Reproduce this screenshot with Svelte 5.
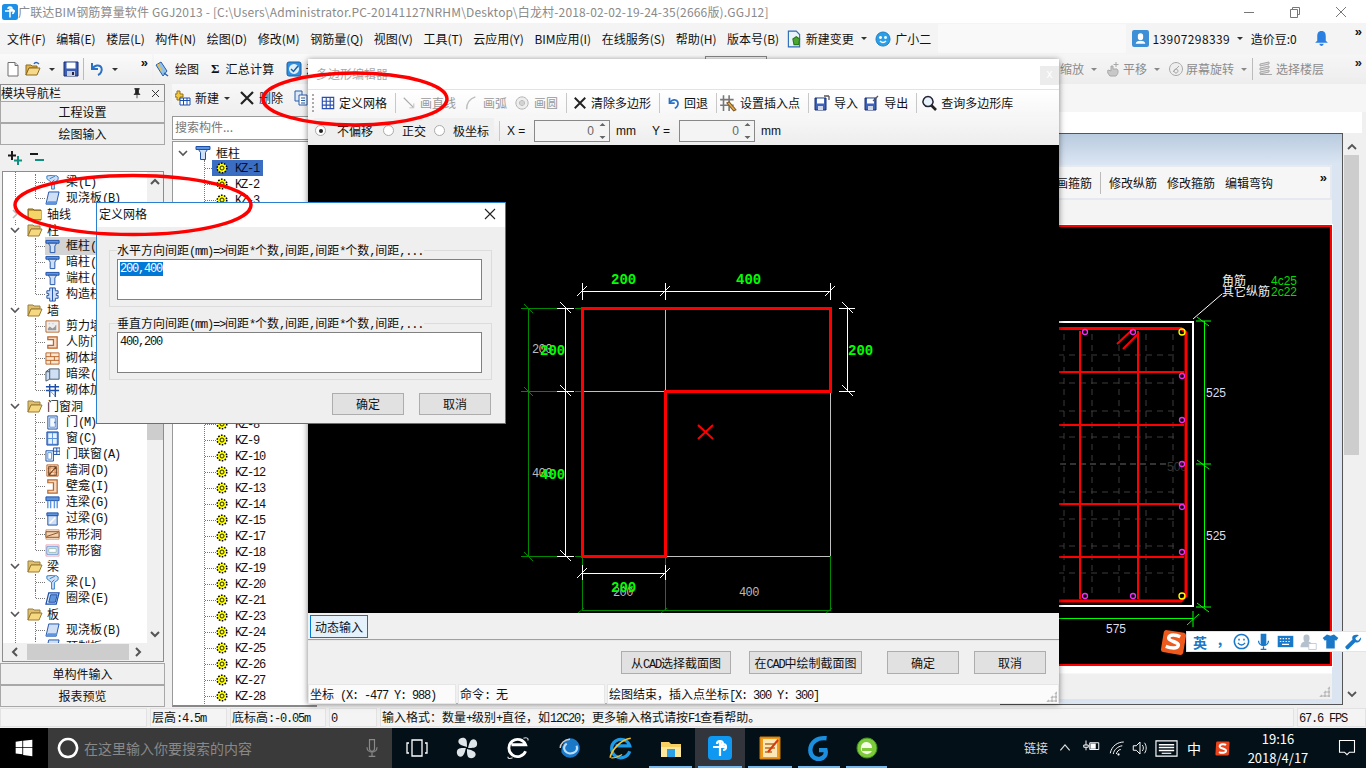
<script>
const B = '#1d4fa8', L = '#cfe0f6', M = '#5d95de', O = '#b8642a', P = '#f6d8c0', G = '#a8a8a8';
const I = {
  logo: [['M2.5 0h11A2.5 2.5 0 0 1 16 2.500v11a2.500 2.500 0 0 1-2.500 2.500h-11A2.500 2.500 0 0 1 0 13.500v-11A2.500 2.500 0 0 1 2.500 0z', '#1c8fe6', 'none'], ['M8 2.500v11M3 7h10M8 7a2 2 0 1 0-2-2M8 7a2 2 0 1 1 2 2.500', 'none', '#fff', 1.5]],
  new: [['M3 1.500h7l3 3V15H3z', '#fff', '#6f6f6f'], ['M10 1.500v3h3', '#ddd', '#6f6f6f']],
  open: [['M1 4h5l1 1h5v2H4l-3 7z', '#e4b24a', '#8a6a20'], ['M4 7h11l-3 7H1z', '#f7d98a', '#8a6a20'], ['M9 3c1-2 3-2 5 0', 'none', '#2f66b8', 1.4]],
  save: [['M1 1h14v14H1z', '#3b5fb5', '#1b2f70'], ['M3.500 1.500h9v6h-9z', '#fff', 'none'], ['M4 10h8v5H4z', '#c8d0e0', 'none'], ['M9 11h2v3H9z', '#224', 'none']],
  undo: [['M4 2v6h6', 'none', '#2a70c8', 2], ['M4.500 8C6 4 12 3 13.500 7c1 3-1 6-3.500 7', 'none', '#2a70c8', 2]],
  draw: [['M2 4l5-3 6 9-4 5z', '#8fc0ec', '#2a5ea8'], ['M4 3l4 8', 'none', '#f0c040', 1.5], ['M10 12l4 3', 'none', '#2a5ea8', 1.5]],
  check: [['M3 1h10a2 2 0 0 1 2 2v10a2 2 0 0 1-2 2H3a2 2 0 0 1-2-2V3a2 2 0 0 1 2-2z', '#2f8fe0', '#1a5fa0'], ['M8 3a5 5 0 1 0 .01 0z', '#dff0fc', 'none'], ['M5 8l2.500 2.500L12 5', 'none', '#1a5fa0', 1.5]],
  newi: [['M2 1h3v3h3v3H5v3H2V7H0V4h2z', '#f0c83a', '#93701a'], ['M5 8h10v7H5z', '#fff', B], ['M5 10.500h10M8.500 8v7M12 8v7', 'none', B]],
  x: [['M2 2l12 12M14 2L2 14', 'none', '#222', 2.2]],
  copy: [['M2 1h7v10H2z', '#dbe8fa', '#2a5ea8'], ['M6 5h8v10H6z', '#fff', '#2a5ea8'], ['M8 8h4M8 10.500h4M8 13h4', 'none', '#2a5ea8']],
  grid: [['M1.500 1.500h13v13h-13zM6 1.500v13M10.500 1.500v13M1.500 6h13M1.500 10.500h13', 'none', '#2a4fb0', 1.3]],
  line: [['M2 2l11 11', 'none', '#aaa', 1.3], ['M8.500 13.500h5v-5', 'none', '#bbb']],
  arc: [['M3 15C3 8 7 3 13 1', 'none', '#bdbdbd', 1.6]],
  circ: [['M8 1a7 7 0 1 0 .01 0z', '#eee', '#aaa'], ['M8 5a3 3 0 1 0 .01 0z', '#d2d2d2', '#b8b8b8']],
  pin: [['M4 1v14M9 1v14M1 5h12M1 10h12', 'none', '#777', 1.4], ['M9 7l6 7-2 1-6-7z', '#e8b04a', '#8a5a20']],
  imp: [['M1 3h11v12H1z', '#3f63b8', '#1b2f70'], ['M3 3.500h7v5H3z', '#fff', 'none'], ['M4 11h5v4H4z', '#d0d8e8', 'none'], ['M10 1l5 0M15 1v4', 'none', '#555', 1.3]],
  exp: [['M1 3h11v12H1z', '#3f63b8', '#1b2f70'], ['M3 3.500h7v5H3z', '#fff', 'none'], ['M4 11h5v4H4z', '#d0d8e8', 'none'], ['M9 6l5-5', 'none', '#555', 1.3]],
  search: [['M7 1.500a5 5 0 1 0 .01 0z', '#e8f2fb', '#223', 1.5], ['M10.500 10.500l4.500 4.500', 'none', '#222', 2.6]],
  pan: [['M5 15c-2-2-3-4-2-6l3 1V5h2v3h4c2 2 1 5-1 7z', '#c8c8c8', G], ['M11 1v5M8.500 3.500h5', 'none', G]],
  rot: [['M8 1.500a6.500 6.500 0 1 0 .01 0z', '#eee', G], ['M5 11l6-6M8 8a2 2 0 1 0 .01 0z', 'none', G]],
  layer: [['M2 3l9-2v2l-9 2zM2 7l9-2v2l-9 2zM2 11l9-2v2l-9 2z', '#ddd', G], ['M2 13.500h12', 'none', G]],
  doc: [['M3 1h7l3 3v11H3z', '#eaf3fc', '#2a6ab8'], ['M7 8l3-2 3 2-1 5H8z', '#4aa832', '#2a7a1a']],
  mascot: [['M8 1a7 7 0 0 1 7 7c0 4-3 7-7 7s-7-3-7-7a7 7 0 0 1 7-7z', '#2a9fe8', '#1a7fc8'], ['M5.500 5a1.500 1.500 0 1 0 .01 0zM10.500 5a1.500 1.500 0 1 0 .01 0z', '#fff', 'none'], ['M5 10c2 2 4 2 6 0', 'none', '#fff', 1.3]],
  user: [['M2 0h12a2 2 0 0 1 2 2v12a2 2 0 0 1-2 2H2a2 2 0 0 1-2-2V2a2 2 0 0 1 2-2z', '#3f8fd6', 'none'], ['M8 3a2.500 2.500 0 0 1 2.500 2.500V7a2.500 2.500 0 0 1-5 0V5.500A2.500 2.500 0 0 1 8 3zM3.500 13c0-2 2-3 4.500-3s4.500 1 4.500 3z', '#fff', 'none']],
  bell: [['M8 1c3 0 4 2 4 5v4l2 2H2l2-2V6c0-3 1-5 4-5z', '#2a7fe0', 'none'], ['M6 13h4a2 2 0 0 1-4 0z', '#2a7fe0', 'none']],
  plusplus: [['M5 1v9M1 5.500h8', 'none', '#1a1a1a', 2], ['M11 6v9M7 10.500h8', 'none', '#0f8f80', 2]],
  minusminus: [['M1 4h8', 'none', '#1a1a1a', 2], ['M6 10h9', 'none', '#0f8f80', 2]],
  pintack: [['M5 2h6v1H10v5l2 2H4l2-2V3H5zM8 10v5', '#222', '#222']],
  folder: [['M1 3h5l1 1h7v10H1z', '#caa034', '#7a6018'], ['M2 5h12v8H2z', '#f5d468', 'none']],
  fopen: [['M1 3h5l1 1h6v3H4l-3 7z', '#e0c070', '#9a8040'], ['M4 7h11l-3 7H1z', '#f6d880', '#9a7a30']],
  col: [['M1 1.500h14v3H1z', M, B], ['M3.500 4.500l2 3v7h5v-7l2-3z', L, B]],
  cons: [['M5 1h6v3h3v3h-2v2h2v3h-3v3H5v-3H2V9h2V7H2V4h3z', L, B], ['M8 1v14', 'none', B]],
  shear: [['M1 2h14v12H1z', '#eee', O], ['M3 10l2-2 3 2 4-3v5H3z', '#999', 'none'], ['M4 5h1M8 5h1M11 7h1', 'none', '#aaa']],
  rf: [['M3 2h10v12H3v-3h6V5H3z', P, O, 1.3]],
  brick: [['M1 2h14v12H1z', '#fbe6d0', O], ['M1 6h14M1 10h14M6 2v4M10 6v4M6 10v4', 'none', O]],
  dark: [['M1 5l4-3h10v11H5l-4 2z', L, '#456'], ['M5 2v11M1 5h4', 'none', '#456']],
  rebar: [['M1 4h14M1 8h14', 'none', B, 1.5], ['M5 1v14M11 1v14', 'none', B, 1.5], ['M5 8l6 6', 'none', M]],
  door: [['M3 1h10v14H3z', '#dceafa', B], ['M5 3h6v10H5z', '#f4f8fd', M], ['M10 8h1', 'none', B, 1.5]],
  win: [['M2 1h12v14H2z', M, B], ['M3.500 2.500h4v5h-4zM8.500 2.500h4v5h-4zM3.500 8.500h4v5h-4zM8.500 8.500h4v5h-4z', '#eaf3fc', 'none']],
  dw: [['M1 4h8v11H1z', '#eaf3fc', B], ['M3 6h4v7H3z', '#fff', M], ['M9 1h7v7H9z', '#eaf3fc', B], ['M12.500 1v7M9 4.500h7', 'none', B]],
  hole: [['M2 2h12v12H2z', '#fbe6d0', O], ['M2 6h12M2 10h12M6 2v12M10 2v12', 'none', '#e0a070'], ['M4 13L12 4M4 4h8v9H4z', 'none', '#6b3d1a', 1.2]],
  niche: [['M3 1h10v14H3v-3h6V4H3z', P, O, 1.3]],
  lb: [['M1 2h14v4H1z', M, B], ['M3 6v8M6 6v8M10 6v8M13 6v8', 'none', M, 1.5]],
  gl: [['M2 2h12v3H2z', M, B], ['M3 5h10v10H3z', L, B], ['M5 13l6-6', 'none', '#fff', 1.5]],
  bh: [['M1 3h14v10H1z', '#fbe9da', '#d89a70'], ['M1 5h14v6H1z', '#f2d0b0', '#8a5020'], ['M2 10l12-4', 'none', '#8a5020']],
  bw: [['M1 2h14v12H1z', '#fde7e0', '#eab'], ['M2 4h12v8H2z', '#eaf3fc', M], ['M4 6h8v4H4z', '#fff', '#9bb']],
  beam: [['M2 1l9-1 3 2v3l-4 3v7H7V8L2 4z', L, '#2a7ac8'], ['M5 4l6-3M7 8l3-3', 'none', '#2a7ac8']],
  ring: [['M4 2h11l-3 12H1z', '#dceafa', B, 1.3], ['M6 4h7l-2 8H4z', '#5f95dc', B]],
  slab: [['M4 1h11l-3 13H1z', L, B], ['M3 11l-2 3h11l1-3z', M, 'none']],
  win10: [['M2 4.500l8-1.100V11H2zM11 3.200L22 2v9H11zM2 12h8v7.600l-8-1.100zM11 12h11v10l-11-1.500z', '#fff', 'none']],
  cort: [['M12 3a9 9 0 1 0 .01 0z', 'none', '#fff', 2.600]],
  mic: [['M9 2h6v11a3 3 0 0 1-6 0z', 'none', '#8a8a8a', 1.4], ['M6 11c0 8 12 8 12 0M12 18v4M8 22h8', 'none', '#8a8a8a', 1.4]],
  task: [['M7 4h10v16H7z', 'none', '#fff', 1.3], ['M4 7H2v10h2M20 7h2v10h-2', 'none', '#fff', 1.3]],
  wheel: [['M12 11C8 10 4 9 4 6s4-4 6-3 2 4 2 8zM13 12c1-4 2-8 5-8s4 4 3 6-4 2-8 2zM12 13c4 1 8 2 8 5s-4 4-6 3-2-4-2-8zM11 12c-1 4-2 8-5 8s-4-4-3-6 4-2 8-2z', '#dfe6ea', 'none']],
  ewhite: [['M19 15a8 8 0 1 1 0-6H6', 'none', '#fff', 2.600], ['M17 3c3-1 5 0 4 2M3 20c-1 2 2 2 4 1', 'none', '#ddd', 1]],
  cw: [['M12 3a9 9 0 1 1-8 13c0-8 5-13 8-13z', '#1a78c8', 'none'], ['M9 8a6 5 0 1 0 9 2', 'none', '#bdf', 2], ['M3 12c0-4 4-8 9-8', 'none', '#ccc', 1.400]],
  ie: [['M20 15a8.500 8.500 0 1 1 0-5H7', 'none', '#1e9be8', 3], ['M2 21C3 14 12 4 21 3', 'none', '#f4c430', 1.5], ['M3 21c3 1 8-2 10-3', 'none', '#f4c430', 1.2]],
  expl: [['M2 6h8l2 2h10v13H2z', '#f6d060', 'none'], ['M2 11h20v10H2z', '#fce89a', 'none'], ['M8 13h8v8H8z', '#2aa0e8', 'none']],
  app: [['M4 0h16a4 4 0 0 1 4 4v16a4 4 0 0 1-4 4H4a4 4 0 0 1-4-4V4a4 4 0 0 1 4-4z', '#0e98f2', 'none'], ['M12 4v16M5 11h14M12 11a3 3 0 1 0-3-3M12 11a3 3 0 1 1 3 3', 'none', '#fff', 2.200]],
  note: [['M2 1h20v22H2z', '#f09a1a', '#c87a10'], ['M5 3h14v18H5z', '#fbe7b8', 'none'], ['M7 8h10M7 12h10M7 16h7', 'none', '#b87020', 1.5], ['M20 4L10 16', 'none', '#d63a10', 2]],
  gg: [['M19 3C10 2 4 7 4 14c0 5 4 9 9 8 4-1 6-4 5-8h-6', 'none', '#1a8fe0', 4]],
  egreen: [['M12 2a10 10 0 1 0 .01 0z', '#7ecb3a', '#3a8a20'], ['M12 6a6 6 0 1 0 5 9H7v-3h10a6 6 0 0 0-5-6z', '#f4fbe6', 'none']],
  plug: [['M4 2v6M1 8h6v3H1zM4 11v4', 'none', '#fff', 1.3], ['M9 5h12v9H9z', 'none', '#fff', 1.3], ['M10 6h7v7h-7z', '#fff', 'none']],
  wifi: [['M3 19c2-10 10-15 18-15M7 20c1-6 6-10 12-11M11 20c1-3 3-6 6-6', 'none', '#fff', 1.3], ['M14 19a1.500 1.500 0 1 0 .01 0z', '#fff', 'none']],
  vol: [['M3 9h4l5-5v16l-5-5H3z', 'none', '#fff', 1.3], ['M15 8c2 2 2 6 0 8M18 5c3 4 3 10 0 14', 'none', '#fff', 1.2]],
  kb: [['M1 4h22v16H1z', 'none', '#fff', 1.2], ['M4 8h16M4 11h16M4 14h16', 'none', '#fff', 1.5], ['M7 17h10', 'none', '#fff', 1.2]],
  sred: [['M5 2h15a2 2 0 0 1 2 2l-1 16a2 2 0 0 1-2 2H4a2 2 0 0 1-2-2L3 4a2 2 0 0 1 2-2z', '#e8431a', 'none'], ['M17 7c-3-2-9-1-9 2s9 3 9 6-6 4-10 2', 'none', '#fff', 2.800]],
  bubble: [['M3 3h18v14h-6l-3 3-3-3H3z', 'none', '#fff', 1.3]],
  up: [['M3 12l6-7 6 7', 'none', '#ddd', 1.5]],
  sbS: [['M6 2l19 3a3 3 0 0 1 2 3l-3 18a3 3 0 0 1-3 2L3 25a3 3 0 0 1-2-3L4 4a3 3 0 0 1 2-2z', '#ee5a1e', 'none'], ['M21 9c-4-2-11-3-12 1s11 4 10 8-8 3-13 1', 'none', '#fff', 3.600]],
  smile: [['M12 2a10 10 0 1 0 .01 0z', '#fff', '#1a78c8', 2.200], ['M8.500 8v2.500M15.500 8v2.500', 'none', '#1a78c8', 2.200], ['M7 14c3 4 7 4 10 0', 'none', '#1a78c8', 2]],
  smic: [['M8 1h8v13a4 4 0 0 1-8 0z', '#1a78c8', 'none'], ['M5 11c0 9 14 9 14 0M12 19v4M8 23h8', 'none', '#1a78c8', 1.8]],
  skb: [['M1 4h22v16H1z', '#1a78c8', 'none'], ['M4 8h2M8 8h2M12 8h2M16 8h2M4 12h2M8 12h2M12 12h2M16 12h2M7 16h10', 'none', '#fff', 1.600]],
  suser: [['M10 2a4 4 0 0 1 4 4v2a4 4 0 0 1-8 0V6a4 4 0 0 1 4-4zM2 19c0-6 4-8 8-8s8 2 8 8z', '#b4c0cc', 'none'], ['M13 14h10v8H13z', '#fff', '#b4c0cc']],
  shirt: [['M7 2l5 2 5-2 6 5-3 4-2-1v12H6V10l-2 1-3-4z', '#1a78c8', 'none']],
  wrench: [['M21 3l-5 4 1 3 3 1 4-5c1 4-3 9-8 7L6 23c-2 1-5-2-4-4l10-10c-2-5 3-8 9-6z', '#1a78c8', 'none']]
};
const nav = [
  { t: '梁(L)', i: 'beam' }, { t: '现浇板(B)', i: 'slab', last: 1 },
  { t: '轴线', f: 'c' }, { t: '柱', f: 'o' },
  { t: '框柱(Z)', i: 'col', sel: 1 }, { t: '暗柱(Z)', i: 'col' }, { t: '端柱(Z)', i: 'col' }, { t: '构造柱(Z)', i: 'cons', last: 1 },
  { t: '墙', f: 'o' },
  { t: '剪力墙(Q)', i: 'shear' }, { t: '人防门框墙(RF)', i: 'rf' }, { t: '砌体墙(Q)', i: 'brick' }, { t: '暗梁(A)', i: 'dark' }, { t: '砌体加筋(Y)', i: 'rebar', last: 1 },
  { t: '门窗洞', f: 'o' },
  { t: '门(M)', i: 'door' }, { t: '窗(C)', i: 'win' }, { t: '门联窗(A)', i: 'dw' }, { t: '墙洞(D)', i: 'hole' }, { t: '壁龛(I)', i: 'niche' }, { t: '连梁(G)', i: 'lb' }, { t: '过梁(G)', i: 'gl' }, { t: '带形洞', i: 'bh' }, { t: '带形窗', i: 'bw', last: 1 },
  { t: '梁', f: 'o' },
  { t: '梁(L)', i: 'beam' }, { t: '圈梁(E)', i: 'ring', last: 1 },
  { t: '板', f: 'o' },
  { t: '现浇板(B)', i: 'slab' }
];
const kzTop = ['KZ-1', 'KZ-2', 'KZ-3'];
const kzBottom = ['KZ-8', 'KZ-9', 'KZ-10', 'KZ-12', 'KZ-13', 'KZ-14', 'KZ-15', 'KZ-17', 'KZ-18', 'KZ-19', 'KZ-20', 'KZ-21', 'KZ-23', 'KZ-24', 'KZ-25', 'KZ-26', 'KZ-27', 'KZ-28'];
const menu = ['文件(F)', '编辑(E)', '楼层(L)', '构件(N)', '绘图(D)', '修改(M)', '钢筋量(Q)', '视图(V)', '工具(T)', '云应用(Y)', 'BIM应用(I)', '在线服务(S)', '帮助(H)', '版本号(B)'];
const parts = (t) => t.match(/[\x20-\x7e]+|[^\x20-\x7e]+/g);
const hBars = [373, 426, 505, 558];
const gridV = [1064, 1092, 1119, 1146, 1173];
const gridH = [356, 384, 412, 438, 493, 520, 547, 574];
const dotsR = [377, 421, 465, 508, 553];
</script>

{#snippet ic(n, s = 16, vb = 16)}
  <svg class="ico" width={s} height={s} viewBox="0 0 {vb} {vb}">
    {#each I[n] as [d, f, st, w]}<path {d} fill={f} stroke={st} stroke-width={w || 1} />{/each}
  </svg>
{/snippet}
{#snippet ss(t)}{#each parts(t) as p}{#if p.charCodeAt(0) < 127}<span class="m">{p}</span>{:else}{p}{/if}{/each}{/snippet}
{#snippet dn()}<i class="caret"></i>{/snippet}
{#snippet kz(name, sel)}
  <div class="kzrow">
    <div class="kzin" class:on={sel}>
      <svg class="gear" width="12" height="12" viewBox="0 0 12 12"><circle cx="6" cy="6" r="4.800" fill="#ff0" stroke="#000" stroke-width="1.500" stroke-dasharray="1.600 1.400" /><circle cx="6" cy="6" r="2" fill="#ff0" stroke="#222" /></svg>
      <span class="kzname">{@render ss(name)}</span>
    </div>
  </div>
{/snippet}

<div class="app">
  <header class="title">
    {@render ic('logo')}
    <span class="ttext">广联达BIM钢筋算量软件 GGJ2013 - [C:\Users\Administrator.PC-20141127NRHM\Desktop\白龙村-2018-02-02-19-24-35(2666版).GGJ12]</span>
    <div class="wctl">
      <svg width="12" height="12" viewBox="0 0 12 12"><path d="M1 6.500h10" stroke="#777" /></svg>
      <svg width="12" height="12" viewBox="0 0 12 12"><path d="M1.500 3.500h7v8h-7zM3.500 3.500v-2h7v7h-2" fill="none" stroke="#777" /></svg>
      <svg width="12" height="12" viewBox="0 0 12 12"><path d="M1 1l10 10M11 1L1 11" stroke="#777" /></svg>
    </div>
  </header>

  <nav class="menu">
    {#each menu as m}<span class="mi">{m}</span>{/each}
    <span class="mi2 change">{@render ic('doc', 18)}新建变更{@render dn()}</span>
    <span class="mi2 mascot">{@render ic('mascot')}广小二</span>
    <div class="blank"></div>
    <span class="mi2 acct">{@render ic('user', 17)}<span class="phone">13907298339</span>{@render dn()}</span>
    <span class="mi2 bean">造价豆:0</span>
    <span class="bell">{@render ic('bell', 17)}</span>
    <span class="more">»</span>
  </nav>

  <div class="tools">
    <div class="tg tg1">
      {@render ic('new')}
      {@render ic('open')}{@render dn()}
      {@render ic('save')}
      <i class="vs"></i>
      {@render ic('undo')}{@render dn()}
      <span class="more mt">»</span>
    </div>
    <div class="tg tg2">
      {@render ic('draw')}<span>绘图</span>
      <b class="sig">Σ</b><span class="wide">汇总计算</span>
      {@render ic('check')}<span>云</span>
    </div>
    <div class="pressed"></div>
    <div class="tg tg3">
      <span>缩放</span>{@render dn()}
      {@render ic('pan')}<span>平移</span>{@render dn()}
      {@render ic('rot')}<span>屏幕旋转</span>{@render dn()}
      <i class="vs"></i>
      {@render ic('layer')}<span>选择楼层</span>
      <span class="more mt2">»</span>
    </div>
  </div>

  <div class="work">
    <aside class="navp">
      <div class="navh"><span>模块导航栏</span><span class="nhic">{@render ic('pintack', 12)}<svg width="9" height="9" viewBox="0 0 9 9"><path d="M1 1l7 7M8 1L1 8" stroke="#333" /></svg></span></div>
      <div class="nbtn">工程设置</div>
      <div class="nbtn">绘图输入</div>
      <div class="ntools">{@render ic('plusplus')}{@render ic('minusminus')}</div>
      <div class="ntree">
        <div class="nbody">
          <div class="nrows">
            <i class="rootline"></i>
            {#each nav as r}
              {#if r.f}
                <div class="row root">
                  <svg class="chev" width="10" height="10" viewBox="0 0 10 10">
                    {#if r.f === 'o'}<path d="M1 3l4 4 4-4" fill="none" stroke="#555" stroke-width="1.600" />{:else}<path d="M3 1l4 4-4 4" fill="none" stroke="#bbb" stroke-width="1.600" />{/if}
                  </svg>
                  {@render ic(r.f === 'o' ? 'fopen' : 'folder')}
                  <span class="lbl">{r.t}</span>
                </div>
              {:else}
                <div class="row child" class:last={r.last}>
                  <i class="vl"></i><i class="hl"></i>
                  <span class="cell" class:sel={r.sel}>{@render ic(r.i, 15)}<span class="lbl">{@render ss(r.t)}</span></span>
                </div>
              {/if}
            {/each}
            <div class="row child"><i class="vl"></i><i class="hl"></i><span class="cell">{@render ic('slab', 15)}<span class="lbl">预制板</span></span></div>
          </div>
          <div class="vbar">
            <svg width="12" height="9" viewBox="0 0 12 9"><path d="M2 7l4-4 4 4" fill="none" stroke="#555" stroke-width="2" /></svg>
            <i class="vthumb"></i>
            <svg width="12" height="9" viewBox="0 0 12 9"><path d="M2 2l4 4 4-4" fill="none" stroke="#555" stroke-width="2" /></svg>
          </div>
        </div>
        <div class="hbar">
          <svg width="8" height="12" viewBox="0 0 8 12"><path d="M6 2L2 6l4 4" fill="none" stroke="#555" stroke-width="2" /></svg>
          <i class="hthumb"></i>
          <svg width="8" height="12" viewBox="0 0 8 12"><path d="M2 2l4 4-4 4" fill="none" stroke="#555" stroke-width="2" /></svg>
        </div>
      </div>
      <div class="nbtn b2">单构件输入</div>
      <div class="nbtn">报表预览</div>
    </aside>

    <section class="mid">
      <div class="midbar">
        {@render ic('newi')}<span>新建</span>{@render dn()}
        {@render ic('x')}<span>删除</span>
        {@render ic('copy')}<span>复制</span>
      </div>
      <div class="searchb">搜索构件...</div>
      <div class="ktree">
        <div class="kroot">
          <svg width="10" height="10" viewBox="0 0 10 10"><path d="M1 3l4 4 4-4" fill="none" stroke="#555" stroke-width="1.600" /></svg>
          {@render ic('col')}<span>框柱</span>
        </div>
        <div class="klist">
          {#each kzTop as k, i}{@render kz(k, i === 0)}{/each}
          <div class="kgap"></div>
          {#each kzBottom as k}{@render kz(k, false)}{/each}
        </div>
      </div>
    </section>

    <section class="area">
      <div class="strip"></div>
      <div class="strip2"></div>
      <div class="subrow">
        <div class="sub">
          <div class="subtitle"></div>
          <div class="subtools">
            <span class="clip">画箍筋</span><i class="vs"></i><span>修改纵筋</span><span>修改箍筋</span><span>编辑弯钩</span>
            <span class="more mt3">»</span>
          </div>
          <div class="subgap"></div>
          <div class="cad">
            <svg class="cadsvg" width="328" height="437" viewBox="1002 228 328 437">
              {#each gridV as x}<path d="M{x} 335V598" stroke="#3c3c3c" stroke-dasharray="6 5" />{/each}
              {#each gridH as y}<path d="M1058 {y}H1178" stroke="#3c3c3c" stroke-dasharray="6 5" />{/each}
              <path d="M1000 465H1170" stroke="#666" stroke-dasharray="6 4" />
              <text x="1167" y="472" class="ct dim">500</text>
              <path d="M1000 323H1193V607H1000" fill="none" stroke="#fff" stroke-width="2" />
              <path d="M1000 329.500H1181l5 4V597l-5 5H1000" fill="none" stroke="#f00" stroke-width="3" />
              <path d="M1080 332V600M1138 332V600" stroke="#f00" stroke-width="2" />
              {#each hBars as y}<path d="M1000 {y}H1184" stroke="#f00" stroke-width="2" />{/each}
              <path d="M1133 330L1117 345M1138 335L1123 350" stroke="#f00" stroke-width="2" />
              <g fill="none" stroke="#f030f0" stroke-width="1.300">
                <circle cx="1085" cy="333" r="2.500" /><circle cx="1133" cy="333" r="2.500" />
                <circle cx="1085" cy="597" r="2.500" /><circle cx="1133" cy="597" r="2.500" />
                {#each dotsR as y}<circle cx="1182" cy={y} r="2.500" />{/each}
              </g>
              <g fill="none" stroke="#ff0" stroke-width="1.300"><circle cx="1182" cy="333" r="3" /><circle cx="1182" cy="597" r="3" /></g>
              <g stroke="#0f0" fill="none">
                <path d="M1204.500 322V608M1196 322H1211M1196 465H1211M1196 608H1211" />
                <path d="M1197 318l12 9M1197 461l12 9M1197 604l12 9" />
                <path d="M1000 619.500H1193M1193 612v16M1187 626l12-11" />
                <path d="M1193 320L1222 295" stroke="#fff" />
              </g>
              <text x="1206" y="398" class="ct wt">525</text>
              <text x="1206" y="541" class="ct wt">525</text>
              <text x="1106" y="634" class="ct wt">575</text>
              <text x="1222" y="286" class="cn">角筋</text>
              <text x="1222" y="297" class="cn">其它纵筋</text>
              <text x="1271" y="286" class="ct gr">4c25</text>
              <text x="1271" y="297" class="ct gr">2c22</text>
            </svg>
          </div>
          <div class="subfoot"><i class="sgrip"></i></div>
        </div>
        <div class="rscroll">
          <svg width="12" height="9" viewBox="0 0 12 9"><path d="M2 7l4-4 4 4" fill="none" stroke="#555" stroke-width="1.800" /></svg>
          <i class="rthumb"></i>
          <svg width="12" height="9" viewBox="0 0 12 9"><path d="M2 2l4 4 4-4" fill="none" stroke="#555" stroke-width="1.800" /></svg>
        </div>
      </div>
    </section>
  </div>

  <footer class="status">
    <div class="sc s1"></div>
    <div class="sc s2">{@render ss('层高:4.5m')}</div>
    <div class="sc s3">{@render ss('底标高:-0.05m')}</div>
    <div class="sc s4">{@render ss('0')}</div>
    <div class="sc s5">{@render ss('输入格式：数量+级别+直径，如12C20；更多输入格式请按F1查看帮助。')}</div>
    <div class="sc s6">{@render ss('67.6 FPS')}</div>
  </footer>

  <div class="taskbar">
    <div class="start">{@render ic('win10', 20, 24)}</div>
    <div class="tsearch">
      {@render ic('cort', 24, 24)}
      <span class="ph">在这里输入你要搜索的内容</span>
      <span class="tmic">{@render ic('mic', 20, 24)}</span>
    </div>
    <div class="apps">
      <div class="ap">{@render ic('task', 24, 24)}</div>
      <div class="ap">{@render ic('wheel', 26, 24)}</div>
      <div class="ap">{@render ic('ewhite', 26, 24)}</div>
      <div class="ap">{@render ic('cw', 26, 24)}</div>
      <div class="ap">{@render ic('ie', 26, 24)}</div>
      <div class="ap run">{@render ic('expl', 24, 24)}</div>
      <div class="ap run act">{@render ic('app', 24, 24)}</div>
      <div class="ap run">{@render ic('note', 24, 24)}</div>
      <div class="ap run">{@render ic('gg', 26, 24)}</div>
      <div class="ap run">{@render ic('egreen', 24, 24)}</div>
    </div>
    <div class="tray">
      <span class="lnk">链接</span>
      <span class="tr t1">{@render ic('up', 14, 18)}</span>
      <span class="tr t2">{@render ic('plug', 18, 24)}</span>
      <span class="tr t3">{@render ic('wifi', 18, 24)}</span>
      <span class="tr t4">{@render ic('vol', 18, 24)}</span>
      <span class="tr t5">{@render ic('kb', 23, 24)}</span>
      <span class="tr t6">中</span>
      <span class="tr t7">{@render ic('sred', 17, 24)}</span>
      <div class="clock"><span>19:16</span><span>2018/4/17</span></div>
      <span class="tr t8">{@render ic('bubble', 20, 24)}</span>
    </div>
  </div>

  <!-- polygon editor window -->
  <div class="editor">
    <div class="etitle"><span class="etext">多边形编辑器</span><span class="eclose">x</span></div>
    <div class="ebar">
      <span class="grip"></span>
      <span class="eit">{@render ic('grid', 14)}<span class="et">定义网格</span></span><i class="esep"></i>
      <span class="eit off">{@render ic('line', 14)}<span class="et">画直线</span></span>
      <span class="eit off g5">{@render ic('arc', 14)}<span class="et">画弧</span></span>
      <span class="eit off g5">{@render ic('circ', 14)}<span class="et">画圆</span></span><i class="esep"></i>
      <span class="eit">{@render ic('x', 14)}<span class="et">清除多边形</span></span><i class="esep"></i>
      <span class="eit">{@render ic('undo', 14)}<span class="et">回退</span></span><i class="esep"></i>
      <span class="eit w18">{@render ic('pin', 18)}<span class="et">设置插入点</span></span><i class="esep"></i>
      <span class="eit imp">{@render ic('imp', 16)}<span class="et">导入</span></span>
      <span class="eit">{@render ic('exp', 16)}<span class="et">导出</span></span><i class="esep"></i>
      <span class="eit srch">{@render ic('search', 16)}<span class="et">查询多边形库</span></span>
    </div>
    <div class="eopts">
      <div class="radios">
        <span class="rd"><i class="radio on"></i>不偏移</span>
        <span class="rd"><i class="radio"></i>正交</span>
        <span class="rd"><i class="radio"></i>极坐标</span>
      </div>
      <i class="esep"></i>
      <span class="lab">X =</span>
      <div class="spin"><span>0</span><svg width="7" height="18" viewBox="0 0 7 18"><path d="M3.500 1l3 3H.5zM3.500 17l3-3H.5z" fill="#666" /></svg></div>
      <span class="mm">mm</span>
      <span class="lab ly">Y =</span>
      <div class="spin"><span>0</span><svg width="7" height="18" viewBox="0 0 7 18"><path d="M3.500 1l3 3H.5zM3.500 17l3-3H.5z" fill="#666" /></svg></div>
      <span class="mm">mm</span>
    </div>
    <div class="ecanvas">
      <svg width="751" height="468" viewBox="308 145 751 468" shape-rendering="crispEdges">
        <g stroke="#080" fill="none">
          <path d="M528.500 308V556M521 308H558M521 391H558M521 556H558M575 308H582M575 391H582M575 556H582" />
          <path d="M582 556V611M665 556V611M830 556V611M582 610.500H830" />
          <path d="M524 304l9 9M524 387l9 9M524 552l9 9" shape-rendering="auto" />
          <path d="M578 613l6-5M661 613l6-5M826 613l6-5" shape-rendering="auto" />
        </g>
        <g stroke="#c0c0c0" fill="none">
          <path d="M665.500 308V391M582 391.500H665M830.500 391V556M665 556.500H830" />
        </g>
        <g stroke="#fff" fill="none">
          <path d="M582 291.500H830M582.500 283V300M665.500 283V300M830.500 283V300" />
          <path d="M565.500 308V556M557 308.500H574M557 391.500H574M557 556.500H574" />
          <path d="M847.500 308V391M839 308.500H855M839 391.500H855" />
          <path d="M582 573.500H665M582.500 565V580M665.500 565V580" />
          <path d="M577 296l10-10M660 296l10-10M825 296l10-10M577 578l10-10M660 578l10-10M560 302l11 11M560 385l11 11M560 550l11 11M842 302l11 11M842 385l11 11" shape-rendering="auto" />
        </g>
        <path d="M582 308.500H830.500V391.500H665.500V556.500H582Z" fill="none" stroke="#f00" stroke-width="3" />
        <path d="M698 425l15 14M713 425l-15 14" stroke="#f00" stroke-width="2" shape-rendering="auto" />
        <text x="532" y="353" class="gt">200</text>
        <text x="532" y="477" class="gt">400</text>
        <text x="613" y="596" class="gt">200</text>
        <text x="739" y="596" class="gt">400</text>
        <text x="611" y="284" class="bt">200</text>
        <text x="736" y="284" class="bt">400</text>
        <text x="540" y="355" class="bt">200</text>
        <text x="540" y="479" class="bt">400</text>
        <text x="848" y="355" class="bt">200</text>
        <text x="611" y="592" class="bt">200</text>
      </svg>
    </div>
    <div class="edyn"><span class="dynb">动态输入</span></div>
    <div class="ebtns">
      <span class="btn wa">{@render ss('从CAD选择截面图')}</span>
      <span class="btn wb">{@render ss('在CAD中绘制截面图')}</span>
      <span class="btn wc">确定</span>
      <span class="btn wc cancel">取消</span>
    </div>
    <div class="estatus">
      <div class="ec e1">{@render ss('坐标 (X: -477 Y: 988)')}</div>
      <div class="ec e2">{@render ss('命令: 无')}</div>
      <div class="ec e3">{@render ss('绘图结束，插入点坐标[X: 300 Y: 300]')}<i class="sgrip eg"></i></div>
    </div>
  </div>

  <!-- define grid dialog -->
  <div class="dlg">
    <div class="dtitle"><span>定义网格</span>
      <svg width="12" height="12" viewBox="0 0 12 12"><path d="M1 1l10 10M11 1L1 11" stroke="#222" stroke-width="1.100" /></svg>
    </div>
    <div class="dbody">
      <fieldset>
        <legend>{@render ss('水平方向间距(mm)=>间距*个数,间距,间距*个数,间距,...')}</legend>
        <div class="ta"><span class="m selt">200,400</span></div>
      </fieldset>
      <fieldset>
        <legend>{@render ss('垂直方向间距(mm)=>间距*个数,间距,间距*个数,间距,...')}</legend>
        <div class="ta"><span class="m">400,200</span></div>
      </fieldset>
      <div class="dbtns"><span class="btn">确定</span><span class="btn">取消</span></div>
    </div>
  </div>

  <svg class="annot" width="1366" height="768" viewBox="0 0 1366 768">
    <ellipse cx="355" cy="99" rx="92" ry="26" />
    <ellipse cx="133" cy="205" rx="118" ry="29.500" />
  </svg>

  <!-- input method bar -->
  <div class="sogou">
    {@render ic('sbS', 27, 28)}
    <div class="sgbar">
      <b class="sgc">英</b>
      <b class="sgc comma">,</b>
      {@render ic('smile', 17, 24)}
      {@render ic('smic', 17, 24)}
      {@render ic('skb', 17, 24)}
      {@render ic('suser', 18, 24)}
      {@render ic('shirt', 17, 24)}
      {@render ic('wrench', 17, 24)}
    </div>
  </div>
</div>

<style>
:global(body) { margin: 0; background: #f0f0f0; }
.app { position: relative; width: 1366px; height: 768px; overflow: hidden; display: flex; flex-direction: column; background: #f0f0f0; font: 12px/16px "Noto Sans CJK SC", "Liberation Sans", sans-serif; color: #111; }
.ico { display: block; flex: none; }
.m { font-family: "Liberation Mono", monospace; font-size: 12px; letter-spacing: -1.2px; white-space: pre; }
.title { height: 23px; flex: none; background: #fff; display: flex; align-items: center; padding-left: 2px; color: #8a8a8a; }
.ttext { white-space: nowrap; font-size: 12px; letter-spacing: 0.17px; }
.wctl { margin-left: auto; display: flex; gap: 34px; padding-right: 19px; }
.menu { height: 31px; flex: none; display: flex; align-items: center; padding-left: 7px; gap: 10.6px; background: #f4f4f4; position: relative; }
.mi { white-space: nowrap; }
.mi2 { display: flex; align-items: center; gap: 2px; white-space: nowrap; }
.mi2.change { margin-left: -5px; gap: 3px; }
.mi2.mascot { margin-left: -6px; gap: 4px; }
.blank { width: 188px; height: 29px; background: #f9f9f9; flex: none; margin-left: -4px; border-radius: 2px; }
.acct { gap: 3px; margin-left: -4px; }
.phone { letter-spacing: .4px; }
.bean { margin-left: -7px; }
.bell { margin-left: 6px; }
.caret { width: 0; height: 0; border: 3px solid transparent; border-top: 3px solid #333; border-bottom: 0; margin: 0 4px; display: block; flex: none; }
.more { position: absolute; right: 4px; top: 2px; font: 13px/14px "Liberation Sans", sans-serif; font-weight: bold; }
.tools { height: 30px; flex: none; display: flex; align-items: center; background: linear-gradient(#f6f6f6, #ededed); position: relative; }
.tg { display: flex; align-items: center; height: 30px; white-space: nowrap; }
.tg1 { width: 152px; padding-left: 5px; box-sizing: border-box; gap: 4px; position: relative; background: linear-gradient(#fafafa, #eee); }
.vs { width: 1px; height: 22px; background: #bbb; display: block; flex: none; }
.mt { top: 2px; right: 4px; }
.tg2 { margin-left: 2px; gap: 4px; background: linear-gradient(#fafafa, #eee); width: 550px; }
.tg2 > span:first-of-type { margin-left: 1px; }
.sig { font: bold 13px "Liberation Serif", serif; margin-left: 8px; }
.wide { letter-spacing: .25px; margin-left: 2px; }
.tg2 .ico:last-of-type { margin-left: 7px; }
.pressed { position: absolute; left: 705px; top: 2px; width: 62px; height: 28px; border: 1px solid #888; box-sizing: border-box; }
.tg3 { position: absolute; left: 1060px; right: 0; gap: 2px; color: #8c8c8c; }
.tg3 .caret { border-top-color: #888; margin: 0 3px 0 5px; }
.tg3 .ico { margin-left: 3px; }
.mt2 { top: 2px; right: 4px; color: #222; }
.work { flex: 1; min-height: 0; display: flex; }
.navp { width: 165px; flex: none; display: flex; flex-direction: column; }
.navh { height: 17px; flex: none; border: 1px solid #8d8d8d; border-bottom: 0; box-sizing: border-box; display: flex; align-items: center; justify-content: space-between; padding-right: 4px; line-height: 14px; background: #f2f2f2; font-size: 12px; }
.nhic { display: flex; align-items: center; gap: 8px; }
.nbtn { height: 22px; flex: none; box-sizing: border-box; border: 1px solid #a8a8a8; background: #f0f0f0; text-align: center; line-height: 20px; }
.b2 { margin-top: 1px; }
.ntools { height: 26px; flex: none; display: flex; align-items: center; gap: 6px; padding-left: 7px; }
.ntree { flex: 1; min-height: 0; margin-left: 2px; margin-right: 1px; border: 1px solid #8d8d8d; background: #f0f0f0; display: flex; flex-direction: column; }
.nbody { flex: 1; min-height: 0; display: flex; }
.nrows { flex: 1; background: #fff; overflow: hidden; position: relative; padding-top: 2px; }
.rootline { position: absolute; left: 12px; top: 0; bottom: 0; border-left: 1px dotted #777; }
.row { height: 16px; display: flex; align-items: center; position: relative; white-space: nowrap; }
.root { padding-left: 7px; }
.chev { flex: none; margin-right: 7px; background: #fff; position: relative; }
.root .ico { background: #fff; position: relative; }
.root .lbl { margin-left: 4px; }
.child { padding-left: 42px; }
.vl { position: absolute; left: 32px; top: 0; bottom: 0; border-left: 1px dotted #777; }
.hl { position: absolute; left: 33px; width: 9px; top: 8px; border-top: 1px dotted #777; }
.last .vl { bottom: 8px; }
.cell { display: flex; align-items: center; gap: 6px; position: relative; }
.sel { background: #d3d3d3; }
.vbar { width: 16px; flex: none; display: flex; flex-direction: column; align-items: center; justify-content: space-between; padding: 5px 0 4px; box-sizing: border-box; position: relative; }
.vthumb { position: absolute; left: 0; right: 0; top: 130px; height: 138px; background: #cdcdcd; }
.hbar { height: 18px; flex: none; display: flex; align-items: center; padding: 0 21px 0 8px; box-sizing: border-box; gap: 5px; }
.hthumb { width: 102px; height: 16px; background: #cdcdcd; margin-right: auto; margin-left: 3px; }
.mid { width: 145px; flex: none; margin-left: 7px; display: flex; flex-direction: column; }
.midbar { height: 32px; flex: none; box-sizing: border-box; padding: 0 0 4px 3px; display: flex; align-items: center; white-space: nowrap; gap: 4px; background: linear-gradient(#f8f8f8, #eee); }
.midbar .caret { margin: 0 1px; }
.midbar .ico:nth-of-type(2) { margin-left: 4px; }
.midbar .ico:nth-of-type(3) { margin-left: 6px; }
.searchb { height: 24px; flex: none; box-sizing: border-box; border: 1px solid #999; background: #fff; color: #777; padding-left: 2px; line-height: 20px; }
.ktree { flex: 1; min-height: 0; margin-top: 1px; background: #fff; border: 1px solid #999; border-right: 0; border-bottom: 2px solid #888; overflow: hidden; position: relative; }
.kroot { height: 15px; margin-top: 3px; display: flex; align-items: center; gap: 5px; padding-left: 5px; }
.kroot svg:first-child { margin-right: 2px; }
.klist { margin-left: 31px; border-left: 1px dotted #777; }
.kgap { height: 208px; }
.kzrow { height: 16px; display: flex; align-items: center; padding-left: 11px; position: relative; white-space: nowrap; }
.kzrow::before { content: ""; position: absolute; left: 0; width: 11px; top: 8px; border-top: 1px dotted #777; }
.kzin { display: flex; align-items: center; gap: 7px; height: 16px; padding: 0 4px; margin-left: -4px; position: relative; }
.kzin.on { background: #3b6ec3; color: #061028; }
.gear { flex: none; }
.kzname { line-height: 16px; }
.area { flex: 1; min-width: 0; display: flex; flex-direction: column; }
.strip { height: 28px; flex: none; background: #f6f6f6; }
.strip2 { height: 21px; flex: none; background: #fff; border: 1px solid #e0e0e0; border-width: 0 4px 0 0; border-color: #f0f0f0; }
.subrow { flex: 1; min-height: 0; display: flex; padding-left: 683px; padding-right: 7px; margin-bottom: 2px; }
.sub { flex: 1; min-width: 0; display: flex; flex-direction: column; border: 1px solid #555; border-width: 1px 1px 1px 0; background: #dbe5f1; padding: 0 10px 5px 0; position: relative; box-sizing: border-box; }
.subtitle { height: 31px; flex: none; background: linear-gradient(#b9cbdf, #dbe6f3); margin-right: -10px; }
.subtools { height: 35px; flex: none; display: flex; align-items: center; gap: 10px; background: #f6f6f6; border: 2px solid #e6eaf0; box-sizing: border-box; padding-left: 54px; position: relative; white-space: nowrap; }
.clip { width: 36px; }
.mt3 { right: 3px; top: 4px; }
.subtools .vs { margin: 0 -2px; }
.subgap { height: 25px; flex: none; background: #f4f4f4; }
.cad { height: 441px; flex: none; box-sizing: border-box; border: 2px solid #f00; background: #000; outline: 1px solid #fff; overflow: hidden; }
.cadsvg { display: block; }
.ct { font: 12px "Liberation Sans", sans-serif; }
.dim { fill: #333; }
.wt { fill: #dde; }
.gr { fill: #0d0; }
.cn { font: 12px "Noto Sans CJK SC", sans-serif; fill: #eee; }
.subfoot { flex: 1; background: linear-gradient(#fff 6px, #f0f0f0 7px); margin-top: 1px; position: relative; }
.sgrip { position: absolute; right: 2px; bottom: 2px; width: 11px; height: 11px; background: radial-gradient(circle at center, #bbb 1.500px, transparent 1.700px) 0 0 / 4px 4px; clip-path: polygon(100% 0, 100% 100%, 0 100%); }
.rscroll { width: 15px; flex: none; background: #f0f0f0; margin-left: 1px; display: flex; flex-direction: column; align-items: center; justify-content: space-between; padding: 9px 0 6px; box-sizing: border-box; position: relative; }
.rthumb { position: absolute; left: 0; right: 0; top: 22px; height: 300px; background: #cdcdcd; }
.status { height: 21px; flex: none; display: flex; gap: 3px; padding: 1px 0; box-sizing: border-box; }
.sc { box-sizing: border-box; background: #f4f4f4; border: 1px solid #e2e2e2; white-space: nowrap; line-height: 16px; padding-left: 1px; }
.s1 { width: 147px; }
.s2 { width: 77px; }
.s3 { width: 96px; }
.s4 { width: 48px; }
.s5 { width: 914px; }
.s6 { width: 69px; }
.taskbar { height: 40px; flex: none; display: flex; background: #041018; color: #fff; }
.start { width: 48px; flex: none; background: #000; display: flex; align-items: center; justify-content: center; }
.tsearch { width: 344px; flex: none; background: #3a3a3a; display: flex; align-items: center; padding-left: 8px; box-sizing: border-box; }
.ph { margin-left: 4px; font-size: 14px; color: #888; white-space: nowrap; }
.tmic { margin-left: auto; margin-right: 10px; }
.apps { display: grid; grid-template-columns: 49px 51px 52px 52px 50px 49px 50px 50px 48px 47px; }
.ap { display: flex; align-items: center; justify-content: center; position: relative; }
.run::after { content: ""; position: absolute; left: 3px; right: 3px; bottom: 0; height: 2px; background: #76b9ed; }
.act { background: #32363c; }
.tray { flex: 1; display: flex; align-items: center; position: relative; padding-left: 134px; color: #ddd; }
.lnk { font-size: 12px; white-space: nowrap; width: 29px; }
.tr { display: flex; align-items: center; justify-content: center; flex: none; }
.t1 { width: 20px; margin-left: 2px; }
.t2 { width: 26px; margin-left: 4px; }
.t3 { width: 24px; }
.t4 { width: 22px; }
.t5 { width: 31px; }
.t6 { width: 24px; font-size: 14px; color: #fff; }
.t7 { width: 32px; }
.clock { width: 70px; display: flex; flex-direction: column; align-items: center; color: #fff; font-size: 13px; line-height: 19px; margin-left: 5px; }
.t8 { width: 38px; margin-left: 15px; }
.editor { position: absolute; left: 308px; top: 59px; width: 751px; height: 644px; background: #f0f0f0; box-shadow: 0 1px 6px rgba(0,0,0,.5); display: flex; flex-direction: column; }
.etitle { height: 30px; flex: none; background: #fff; display: flex; align-items: center; padding-left: 8px; color: #a8a8a8; position: relative; }
.etext { font-size: 12px; }
.eclose { position: absolute; right: 0; top: 7px; width: 19px; height: 19px; background: #ececec; color: #fff; text-align: center; line-height: 17px; font-family: "Liberation Sans", sans-serif; }
.ebar { height: 28px; flex: none; box-sizing: border-box; border-top: 1px solid #e3e3e3; background: linear-gradient(#fff, #f6f6f6); display: flex; align-items: center; padding: 0 0 2px 4px; white-space: nowrap; }
.grip { width: 2px; height: 18px; border-left: 2px dotted #aaa; margin-right: 5px; }
.eit { display: flex; align-items: center; gap: 4px; margin-right: 8px; }
.eit.off { color: #999; }
.eit.g5 { gap: 5px; }
.eit.w18 { gap: 3px; margin-left: -4px; }
.eit.imp { margin-right: 6px; margin-left: -1px; }
.eit.srch { margin-left: -2px; }
.et { white-space: nowrap; }
.esep { width: 1px; height: 20px; background: #c8c8c8; display: block; flex: none; margin: 0 6px 0 0; }
.eopts { height: 28px; flex: none; box-sizing: border-box; display: flex; align-items: center; background: linear-gradient(#f7f7f7, #ededed); padding: 0 0 1px 6px; white-space: nowrap; }
.radios { display: flex; align-items: center; height: 26px; background: #efefef; width: 180px; gap: 8px; padding-left: 1px; box-sizing: border-box; margin-right: 5px; }
.rd { display: flex; align-items: center; gap: 8px; }
.rd:first-child { gap: 11px; margin-right: 2px; }
.radio { width: 11px; height: 11px; border-radius: 50%; border: 1px solid #aaa; background: #fff; display: block; box-sizing: border-box; position: relative; flex: none; }
.radio.on::after { content: ""; position: absolute; left: 2.500px; top: 2.500px; width: 4px; height: 4px; border-radius: 50%; background: #222; }
.lab { margin-left: 1px; width: 27px; font-family: "Liberation Sans", sans-serif; }
.ly { margin-left: 13px; }
.spin { width: 76px; height: 22px; box-sizing: border-box; border: 1px solid #888; background: #f4f4f4; display: flex; align-items: center; justify-content: flex-end; gap: 5px; padding-right: 3px; color: #666; font-family: "Liberation Sans", sans-serif; }
.mm { margin-left: 6px; width: 23px; font-family: "Liberation Sans", sans-serif; }
.ecanvas { height: 468px; flex: none; background: #000; }
.ecanvas svg { display: block; }
.gt { font: 12px "Liberation Mono", monospace; fill: #bbb; letter-spacing: -.6px; }
.bt { font: bold 14px "Liberation Mono", monospace; fill: #0f0; }
.edyn { height: 27px; flex: none; padding: 2px; box-sizing: border-box; border-bottom: 1px solid #a0a0a0; display: flex; }
.dynb { width: 58px; height: 23px; box-sizing: border-box; border: 1px solid #0078d7; background: #e5f1fb; text-align: center; line-height: 21px; }
.ebtns { height: 42px; flex: none; display: flex; align-items: center; padding-top: 1px; padding-left: 313px; box-sizing: border-box; border-top: 1px solid #e8e8e8; }
.btn { height: 23px; box-sizing: border-box; border: 1px solid #adadad; background: #e1e1e1; text-align: center; line-height: 21px; white-space: nowrap; display: block; flex: none; }
.wa { width: 110px; margin-right: 18px; }
.wb { width: 113px; margin-right: 25px; }
.wc { width: 72px; }
.cancel { margin-left: 15px; }
.estatus { height: 20px; flex: none; display: flex; gap: 2px; margin-top: 2px; }
.ec { box-sizing: border-box; background: #fbfbfb; border: 1px solid #e6e6e6; white-space: nowrap; line-height: 17px; padding-left: 1px; overflow: hidden; position: relative; }
.e1 { width: 148px; }
.e2 { width: 147px; }
.e3 { flex: 1; }
.eg { right: 1px; bottom: 1px; }
.dlg { position: absolute; left: 96px; top: 202px; width: 410px; height: 222px; box-sizing: border-box; border: 1px solid #2b7fcf; background: #efefef; display: flex; flex-direction: column; }
.dtitle { height: 24px; flex: none; background: #fff; display: flex; align-items: center; justify-content: space-between; padding: 0 9px 2px 2px; box-sizing: border-box; }
.dbody { flex: 1; display: flex; flex-direction: column; padding: 16px 13px 0 12px; }
fieldset { margin: 0 0 9px; padding: 2px 9px 6px 7px; border: 1px solid #dcdcdc; min-width: 0; }
legend { padding: 0 1px 0 0; line-height: 14px; height: 14px; white-space: nowrap; background: #efefef; }
.ta { height: 41px; box-sizing: border-box; border: 1px solid #808080; background: #fff; padding: 0 0 0 2px; line-height: 14px; }
.selt { background: #0078d7; color: #fff; padding-right: 1px; }
.dbtns { display: flex; justify-content: flex-end; gap: 15px; margin-top: 4px; padding-right: 1px; }
.dbtns .btn { width: 72px; height: 22px; line-height: 20px; }
.annot { position: absolute; left: 0; top: 0; pointer-events: none; }
.annot ellipse { fill: none; stroke: #f00; stroke-width: 3.5; }
.sogou { position: absolute; left: 1160px; top: 628px; width: 206px; display: flex; align-items: center; }
.sgbar { flex: 1; height: 21px; background: #fff; border: 1px solid #dbe6f2; border-right: 0; box-sizing: border-box; display: flex; align-items: center; gap: 5px; padding-left: 6px; margin-left: -1px; }
.sgc { color: #1a78c8; font-size: 14px; }
.comma { width: 10px; margin: -6px 3px 0 3px; text-align: center; }
</style>
